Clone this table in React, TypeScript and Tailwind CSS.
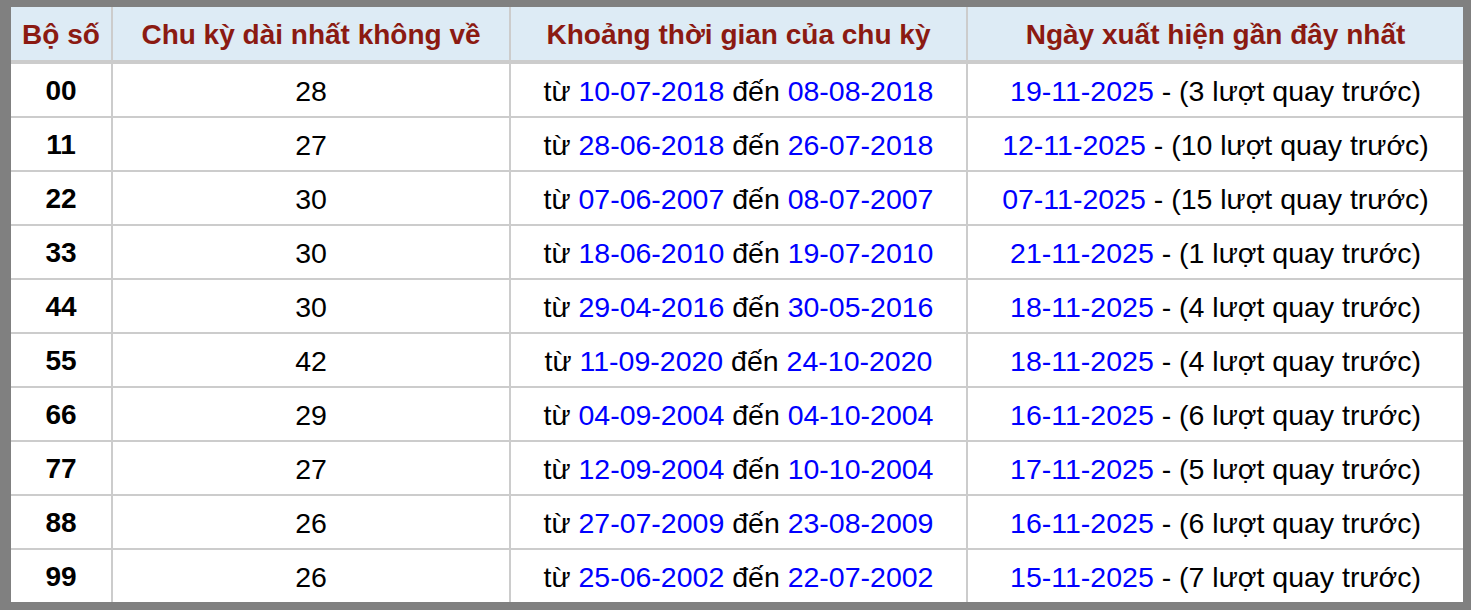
const rows = [
  { bo: "00", chuKy: 28, tu: "10-07-2018", den: "08-08-2018", gan: "19-11-2025", luot: 3 },
  { bo: "11", chuKy: 27, tu: "28-06-2018", den: "26-07-2018", gan: "12-11-2025", luot: 10 },
  { bo: "22", chuKy: 30, tu: "07-06-2007", den: "08-07-2007", gan: "07-11-2025", luot: 15 },
  { bo: "33", chuKy: 30, tu: "18-06-2010", den: "19-07-2010", gan: "21-11-2025", luot: 1 },
  { bo: "44", chuKy: 30, tu: "29-04-2016", den: "30-05-2016", gan: "18-11-2025", luot: 4 },
  { bo: "55", chuKy: 42, tu: "11-09-2020", den: "24-10-2020", gan: "18-11-2025", luot: 4 },
  { bo: "66", chuKy: 29, tu: "04-09-2004", den: "04-10-2004", gan: "16-11-2025", luot: 6 },
  { bo: "77", chuKy: 27, tu: "12-09-2004", den: "10-10-2004", gan: "17-11-2025", luot: 5 },
  { bo: "88", chuKy: 26, tu: "27-07-2009", den: "23-08-2009", gan: "16-11-2025", luot: 6 },
  { bo: "99", chuKy: 26, tu: "25-06-2002", den: "22-07-2002", gan: "15-11-2025", luot: 7 },
];

const headers = ["Bộ số", "Chu kỳ dài nhất không về", "Khoảng thời gian của chu kỳ", "Ngày xuất hiện gần đây nhất"];

export default function App() {
  return (
    <div className="min-h-screen bg-white font-['Liberation_Sans',Arial,sans-serif]">
      <div className="w-[1471px] border-t-[7px] border-l-[11px] border-r-[8px] border-b-[8px] border-[#808080]">
        <div className="grid grid-cols-[100px_396px_455px_495px] gap-[2px] bg-[#cccccc]">
          {headers.map((h) => (
            <div
              key={h}
              className="h-[55px] pt-[3px] border-b-2 border-[#cccccc] bg-[#ddebf5] flex items-center justify-center text-[28px] font-bold text-[#8b1a12] whitespace-nowrap"
            >
              {h}
            </div>
          ))}
          {rows.map((r) => (
            <div key={r.bo} className="contents">
              <div className="h-[52px] pt-[2px] bg-white flex items-center justify-center text-[28px] font-bold text-black">
                {r.bo}
              </div>
              <div className="h-[52px] pt-[2px] bg-white flex items-center justify-center text-[28.5px] text-black">
                {r.chuKy}
              </div>
              <div className="h-[52px] pt-[2px] bg-white flex items-center justify-center text-[28.5px] text-black whitespace-pre">
                từ <span className="text-[#0000ff]">{r.tu}</span> đến <span className="text-[#0000ff]">{r.den}</span>
              </div>
              <div className="h-[52px] pt-[2px] bg-white flex items-center justify-center text-[28.5px] text-black whitespace-pre">
                <span className="text-[#0000ff]">{r.gan}</span> - ({r.luot} lượt quay trước)
              </div>
            </div>
          ))}
        </div>
      </div>
    </div>
  );
}
